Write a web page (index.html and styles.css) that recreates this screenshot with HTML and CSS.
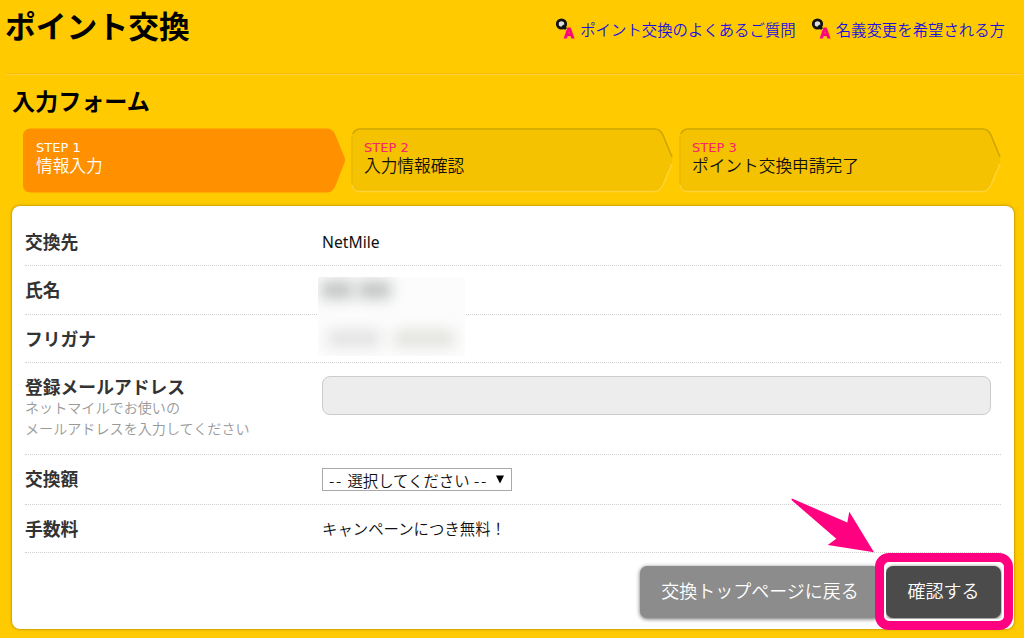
FILE: index.html
```html
<!DOCTYPE html>
<html lang="ja">
  <head>
    <meta charset="utf-8">
    <title>ポイント交換</title>
    <link rel="stylesheet" href="styles.css">
  </head>
  <body>
    <div class="header">
      <h1>ポイント交換</h1>
      <div class="links">
        <div class="link">
          <svg class="qa" width="22" height="24" viewBox="0 0 22 24">
            <circle class="ring" cx="7.5" cy="8" r="4.2"/>
            <path class="tail" d="M8.5 9.5L12 13"/>
            <text class="a" x="10" y="22">A</text>
          </svg>
          <a href="#">ポイント交換のよくあるご質問</a>
        </div>
        <div class="link">
          <svg class="qa" width="22" height="24" viewBox="0 0 22 24">
            <circle class="ring" cx="7.5" cy="8" r="4.2"/>
            <path class="tail" d="M8.5 9.5L12 13"/>
            <text class="a" x="10" y="22">A</text>
          </svg>
          <a href="#">名義変更を希望される方</a>
        </div>
      </div>
    </div>

    <h2>入力フォーム</h2>
    <div class="steps">
      <div class="step active">
        <svg class="shape" width="322" height="65" viewBox="0 0 322 65">
          <path d="M8 0.5H304Q309 0.5 312 6L321 28Q323 32 321 36L312 59Q309 64.5 304 64.5H8Q0 64.5 0 57V8Q0 0.5 8 0.5Z"/>
        </svg>
        <p class="num">STEP 1</p>
        <p>情報入力</p>
      </div>
      <div class="step">
        <svg class="shape" width="322" height="65" viewBox="0 0 322 65">
          <path d="M8 0.5H304Q309 0.5 312 6L321 28Q322 32 321 36L312 58Q309 63.5 304 63.5H8Q0.5 63.5 0.5 57V8Q0.5 0.5 8 0.5Z"/>
          <path class="dark" d="M2 6Q4 1 9 1H304Q309 1 312 7L321 29"/>
          <path class="side" d="M1 57V8"/>
          <path class="light" d="M321 36L312 57Q309 63.5 304 63.5H8Q2 63.5 1 57"/>
        </svg>
        <p class="num">STEP 2</p>
        <p>入力情報確認</p>
      </div>
      <div class="step">
        <svg class="shape" width="322" height="65" viewBox="0 0 322 65">
          <path d="M8 0.5H304Q309 0.5 312 6L321 28Q322 32 321 36L312 58Q309 63.5 304 63.5H8Q0.5 63.5 0.5 57V8Q0.5 0.5 8 0.5Z"/>
          <path class="dark" d="M2 6Q4 1 9 1H304Q309 1 312 7L321 29"/>
          <path class="side" d="M1 57V8"/>
          <path class="light" d="M321 36L312 57Q309 63.5 304 63.5H8Q2 63.5 1 57"/>
        </svg>
        <p class="num">STEP 3</p>
        <p>ポイント交換申請完了</p>
      </div>
    </div>

    <div class="panel">
      <div class="row">
        <div class="label">交換先</div>
        <div class="value latin">NetMile</div>
      </div>
      <div class="row name">
        <div class="label">氏名</div>
        <div class="value"></div>
        <!-- personal data is masked -->
        <div class="mask">
          <div class="blur b1"></div>
          <div class="blur b2"></div>
          <div class="blur b3"></div>
          <div class="blur b4"></div>
        </div>
      </div>
      <div class="row kana">
        <div class="label">フリガナ</div>
        <div class="value"></div>
      </div>
      <div class="row mail">
        <div class="label">
          登録メールアドレス
          <p class="hint">ネットマイルでお使いの<br>メールアドレスを入力してください</p>
        </div>
        <div class="value"><input type="text"></div>
      </div>
      <div class="row amount">
        <div class="label">交換額</div>
        <div class="value">
          <div class="select"><span><i>--</i> 選択してください <i>--</i></span>
            <svg width="8" height="9" viewBox="0 0 8 9"><path d="M0 0.5H8L4 8.5Z"/></svg>
          </div>
        </div>
      </div>
      <div class="row fee">
        <div class="label">手数料</div>
        <div class="value">キャンペーンにつき無料！</div>
      </div>
      <div class="buttons">
        <div class="btn back">交換トップページに戻る</div>
        <div class="btn confirm">確認する
          <div class="frame"></div>
          <svg class="arrow" width="84" height="56" viewBox="0 0 84 56">
            <path d="M1 0.5L56.3 24.5L58.3 13.7L83 54.3L36.7 47L45.3 40.8L1 2.5Q0 1 1 0.5Z"/>
          </svg>
        </div>
      </div>
    </div>
  </body>
</html>
```

FILE: styles.css
```css
*{
    margin: 0;
    padding: 0;
    box-sizing: border-box;
}
body{
    width: 1024px;
    height: 638px;
    overflow: hidden;
    background: #ffcb00;
    color: #222;
    font-family: "Noto Sans CJK JP", sans-serif;
    font-size: 15.4px;
}
.header{
    height: 75px;
    margin: 0 4px 0 6px;
    display: flex;
    justify-content: space-between;
    border-bottom: 1px solid #ffd23c;
    box-shadow: inset 0 -1px 0 #ffbb00;
}
h1{
    margin-left: -1px;
    font-size: 30.8px;
    line-height: 50px;
    color: #000;
}
.links{
    display: flex;
    gap: 14px;
    padding: 16px 15px 0 0;
}
.link{
    display: flex;
    height: 26px;
    line-height: 26px;
}
.link a{
    color: #1a10e0;
    text-decoration: none;
    font-weight: 350;
}
.qa{
    margin-right: 4px;
}
.qa .ring{
    fill: #ddd;
    stroke: #111;
    stroke-width: 2.8;
}
.qa .tail{
    stroke: #111;
    stroke-width: 2.8;
}
.qa .a{
    font-family: "Liberation Sans", sans-serif;
    font-weight: bold;
    font-size: 14px;
    fill: #ff0080;
    stroke: #ff0080;
    stroke-width: 1;
}
h2{
    margin-left: 12px;
    height: 53px;
    font-size: 23.1px;
    line-height: 50px;
    color: #000;
}
.steps{
    display: flex;
    gap: 6px;
    margin-left: 23px;
}
.step{
    position: relative;
    width: 322px;
    height: 65px;
    padding: 11px 13px;
    font-size: 16.7px;
    line-height: 18px;
    font-weight: 350;
    color: #111;
}
.step p{
    position: relative;
}
.step .num{
    font-family: "DejaVu Sans", sans-serif;
    font-size: 13px;
    line-height: 17px;
    font-weight: normal;
    color: #ff2070;
}
.step.active, .step.active .num{
    color: #fff;
}
.shape{
    position: absolute;
    left: 0;
    top: 0;
    fill: #f4c200;
}
.active .shape{
    fill: #ff9000;
}
.shape .dark{
    fill: none;
    stroke: #d0a600;
    stroke-width: 1.6;
}
.shape .side{
    stroke: #e4b500;
}
.shape .light{
    fill: none;
    stroke: #ffd338;
    stroke-width: 1.5;
}
.panel{
    width: 1002px;
    height: 423px;
    margin: 13px 0 0 12px;
    padding: 12px 13px 0;
    background: #fff;
    border-radius: 8px;
    box-shadow: 0 0 3px rgba(80, 60, 0, 0.6);
}
.row{
    position: relative;
    display: flex;
    align-items: center;
    height: 48px;
    padding-bottom: 2px;
    border-bottom: 1px dotted #d0d0d0;
}
.name{
    height: 49px;
}
.mail{
    height: 92px;
    align-items: flex-start;
    padding-top: 13px;
}
.amount{
    height: 50px;
}
.fee{
    height: 48px;
}
.label{
    width: 297px;
    font-size: 17.8px;
    line-height: 22px;
    font-weight: bold;
    color: #333;
}
.mail .label{
    margin-top: -1px;
}
.amount .label{
    margin-top: -2px;
}
.hint{
    font-size: 14.1px;
    line-height: 21px;
    font-weight: 350;
    color: #999;
}
.value{
    flex: 1;
    font-weight: 350;
    color: #111;
}
.latin{
    padding-top: 2px;
    font-family: "Noto Sans", sans-serif;
    font-weight: normal;
    font-size: 15.7px;
}
.mask{
    position: absolute;
    left: 293px;
    top: 11px;
    width: 147px;
    height: 79px;
    z-index: 1;
    overflow: hidden;
    background: #fcfcfc;
}
.blur{
    position: absolute;
    filter: blur(7px);
    background: #c2c4c4;
}
.b1{
    left: 3px;
    top: 4px;
    width: 32px;
    height: 18px;
}
.b2{
    left: 40px;
    top: 4px;
    width: 33px;
    height: 18px;
}
.b3{
    left: 10px;
    top: 53px;
    width: 52px;
    height: 17px;
    background: #e2e2e2;
}
.b4{
    left: 76px;
    top: 53px;
    width: 60px;
    height: 17px;
    background: #e2e2de;
}
input{
    display: block;
    width: 669px;
    height: 39px;
    border: 1px solid #ccc;
    border-radius: 8px;
    background: #ededed;
}
.select{
    display: flex;
    align-items: center;
    justify-content: space-between;
    width: 190px;
    height: 23px;
    margin-top: 2px;
    padding: 1px 7px 0 6px;
    border: 1px solid #a9a9a9;
    line-height: 20px;
    white-space: nowrap;
}
.select i{
    font-style: normal;
    letter-spacing: 1.7px;
}
.select span{
    word-spacing: 1px;
}
.select svg{
    margin-top: -2px;
}
.buttons{
    display: flex;
    justify-content: flex-end;
    gap: 6px;
    padding-top: 13px;
}
.btn{
    position: relative;
    height: 52px;
    line-height: 48px;
    border-radius: 7px;
    text-align: center;
    font-size: 18px;
    font-weight: 350;
    color: #fff;
    box-shadow: 0 1px 4px rgba(0, 0, 0, 0.6);
}
.back{
    width: 240px;
    background: #8c8c8c;
}
.confirm{
    width: 115px;
    background: #4b4b4b;
}
.frame{
    position: absolute;
    left: -11px;
    top: -13px;
    width: 138px;
    height: 77px;
    border: 9px solid #ff0080;
    border-radius: 14px;
    box-shadow: inset 0 0 0 2px #fff;
}
.arrow{
    position: absolute;
    left: -95px;
    top: -68px;
    fill: #ff0080;
}
```
